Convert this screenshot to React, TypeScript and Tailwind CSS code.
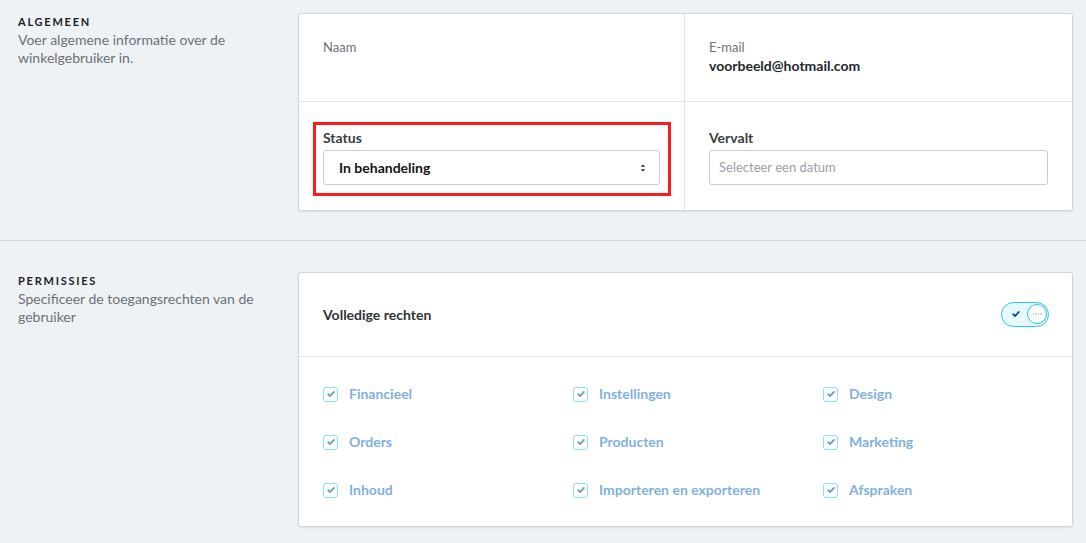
import { useState } from "react";

const permissions = [
  "Financieel",
  "Instellingen",
  "Design",
  "Orders",
  "Producten",
  "Marketing",
  "Inhoud",
  "Importeren en exporteren",
  "Afspraken",
];

const SectionIntro = ({ title, text }: { title: string; text: string }) => (
  <div className="w-[298px] shrink-0 pl-[18px] pr-[36px] pt-[1px]">
    <h2 className="text-[11px] leading-[16px] font-bold tracking-[0.16em] text-[#1d2125]">
      {title}
    </h2>
    <p className="mt-[1px] text-[14px] leading-[18px] text-[#6b7177]">{text}</p>
  </div>
);

const CheckIcon = ({ className }: { className: string }) => (
  <svg viewBox="0 0 12 12" className={className} fill="none">
    <path
      d="M2.6 6.3 L4.9 8.4 L9.4 3.6"
      stroke="currentColor"
      strokeWidth="2.2"
      strokeLinecap="round"
      strokeLinejoin="round"
    />
  </svg>
);

const App = () => {
  const [checked, setChecked] = useState<string[]>(permissions);

  const toggle = (name: string) =>
    setChecked((prev) =>
      prev.includes(name) ? prev.filter((p) => p !== name) : [...prev, name]
    );

  return (
    <main
      className="min-h-screen w-[1086px] bg-[#eff2f5] text-[#2b2f33]"
      style={{ fontFamily: "Lato, 'Open Sans', sans-serif" }}
    >
      {/* Algemeen */}
      <section className="flex items-start pt-[13px] pb-[29px] border-b border-[#d3d7db]">
        <SectionIntro
          title="ALGEMEEN"
          text="Voer algemene informatie over de winkelgebruiker in."
        />
        <div className="w-[775px] bg-white border border-[#d2d6da] rounded-[3px] shadow-[0_1px_2px_rgba(0,0,0,0.08)]">
          <div className="grid grid-cols-[386px_1fr] border-b border-[#e1e4e7]">
            <div className="h-[87px] px-6 pt-[25px] border-r border-[#e1e4e7]">
              <div className="text-[13px] leading-[16px] text-[#6e7378]">Naam</div>
            </div>
            <div className="h-[87px] px-6 pt-[25px]">
              <div className="text-[13px] leading-[16px] text-[#6e7378]">E-mail</div>
              <div className="mt-[2px] text-[14px] leading-[18px] font-bold text-[#24282c]">
                voorbeeld@hotmail.com
              </div>
            </div>
          </div>
          <div className="grid grid-cols-[386px_1fr]">
            <div className="h-[108px] px-6 pt-[27px] border-r border-[#e1e4e7]">
              <div className="relative">
                <div className="absolute -left-[10px] -right-[11px] -top-[7px] -bottom-[11px] border-[3px] border-[#ff1a1a] pointer-events-none" />
                <label className="block text-[14px] leading-[18px] font-bold text-[#3a3e42]">
                  Status
                </label>
                <div className="mt-[3px] h-[35px] flex items-center justify-between border border-[#c9cdd2] rounded-[3px] pl-[15px] pr-[13px]">
                  <span className="text-[14px] font-bold text-[#111417]">In behandeling</span>
                  <svg viewBox="0 0 6 10" className="w-[6px] h-[10px] text-[#222]">
                    <path d="M0.8 3.8 L3 1.6 L5.2 3.8 Z" fill="currentColor" />
                    <path d="M0.8 6.2 L3 8.4 L5.2 6.2 Z" fill="currentColor" />
                  </svg>
                </div>
              </div>
            </div>
            <div className="h-[108px] px-6 pt-[27px]">
              <label className="block text-[14px] leading-[18px] font-bold text-[#3a3e42]">
                Vervalt
              </label>
              <div className="mt-[3px] h-[35px] flex items-center border border-[#c9cdd2] rounded-[3px] pl-[9px]">
                <span className="text-[13px] text-[#9aa0a6]">Selecteer een datum</span>
              </div>
            </div>
          </div>
        </div>
      </section>

      {/* Permissies */}
      <section className="flex items-start pt-[31px] pb-[16px]">
        <SectionIntro
          title="PERMISSIES"
          text="Specificeer de toegangsrechten van de gebruiker"
        />
        <div className="w-[775px] bg-white border border-[#d2d6da] rounded-[3px] shadow-[0_1px_2px_rgba(0,0,0,0.08)]">
          <div className="h-[84px] flex items-center justify-between pl-6 pr-[23px] border-b border-[#e1e4e7]">
            <span className="text-[14px] font-bold text-[#2f3337]">Volledige rechten</span>
            <div className="relative w-[48px] h-[25px] rounded-full bg-[#e8f9fd] border-[1.5px] border-[#27c6ef]">
              <CheckIcon className="absolute left-[9px] top-[6px] w-[10px] h-[10px] text-[#17569a]" />
              <div className="absolute right-[1px] top-[1px] w-[20px] h-[20px] rounded-full bg-white border-[1.5px] border-[#27c6ef] flex items-center justify-center gap-[1px]">
                <span className="w-[1.5px] h-[1.5px] rounded-full bg-[#c9cdd2]" />
                <span className="w-[1.5px] h-[1.5px] rounded-full bg-[#c9cdd2]" />
                <span className="w-[1.5px] h-[1.5px] rounded-full bg-[#c9cdd2]" />
                <span className="w-[1.5px] h-[1.5px] rounded-full bg-[#c9cdd2]" />
              </div>
            </div>
          </div>
          <div className="grid grid-cols-[250px_250px_1fr] pl-6 pt-[12px] pb-[13px]">
            {permissions.map((name) => (
              <button
                key={name}
                onClick={() => toggle(name)}
                className="h-[48px] flex items-center gap-[11px] text-left"
              >
                <span className="w-[15px] h-[15px] mt-[2px] flex items-center justify-center rounded-[3px] border-[1.5px] border-[#86e0f6] bg-white">
                  {checked.includes(name) && (
                    <CheckIcon className="w-[10px] h-[10px] text-[#6ba3d6]" />
                  )}
                </span>
                <span className="text-[14px] font-bold text-[#7fb1de]">{name}</span>
              </button>
            ))}
          </div>
        </div>
      </section>
    </main>
  );
};

export default App;
